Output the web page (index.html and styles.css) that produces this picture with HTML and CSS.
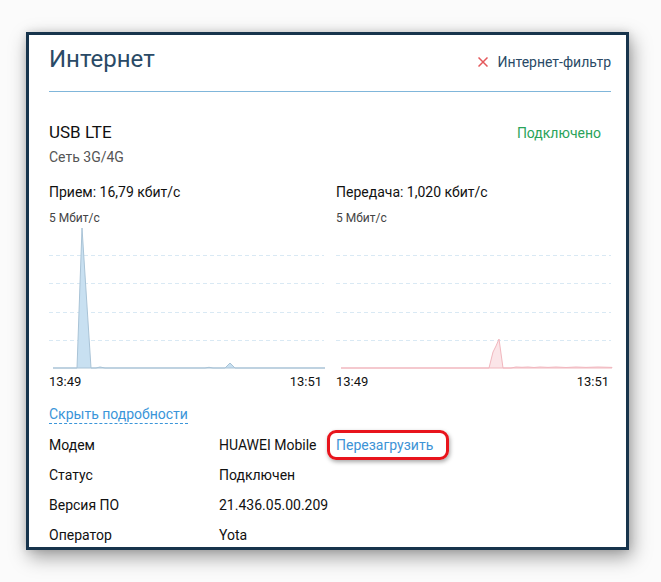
FILE: index.html
```html
<!DOCTYPE html>
<html lang="ru">
<head>
<meta charset="utf-8">
<title>Интернет</title>
<link rel="stylesheet" href="styles.css">
</head>
<body>
<div class="panel">
  <div class="head">
    <h1 class="title">Интернет</h1>
    <a class="filter"><svg class="x-icon" width="10" height="10" viewBox="0 0 10 10"><path d="M0.5 0.5 L9.5 9.5 M9.5 0.5 L0.5 9.5" stroke="#e4585b" stroke-width="1.5" fill="none"/></svg>Интернет-фильтр</a>
  </div>

  <div class="conn">
    <div class="conn-name">USB LTE</div>
    <div class="conn-state">Подключено</div>
  </div>
  <div class="conn-sub">Сеть 3G/4G</div>

  <div class="charts">
    <div class="chart">
      <div class="rate">Прием: 16,79 кбит/с</div>
      <div class="scale">5 Мбит/с</div>
      <svg class="graph" width="276" height="143" viewBox="0 0 276 143">
        <g stroke="#d9e9f4" stroke-width="1" stroke-dasharray="4 3">
          <line x1="0" y1="29.5" x2="275" y2="29.5"/>
          <line x1="0" y1="57.5" x2="275" y2="57.5"/>
          <line x1="0" y1="86.5" x2="275" y2="86.5"/>
          <line x1="0" y1="114.5" x2="275" y2="114.5"/>
        </g>
        <path d="M4 142 L28 142 L33 2 L42 142 L47 142 L51 141 L56 142 L156 142 L160 141.3 L164 142 L176 142 L181 137 L186 142 L276 142 Z" fill="#c8e0f1" stroke="#a9c3d6" stroke-width="1"/>
      </svg>
      <div class="times"><span>13:49</span><span>13:51</span></div>
    </div>
    <div class="chart">
      <div class="rate">Передача: 1,020 кбит/с</div>
      <div class="scale">5 Мбит/с</div>
      <svg class="graph" width="276" height="143" viewBox="0 0 276 143">
        <g stroke="#d9e9f4" stroke-width="1" stroke-dasharray="4 3">
          <line x1="0" y1="29.5" x2="275" y2="29.5"/>
          <line x1="0" y1="57.5" x2="275" y2="57.5"/>
          <line x1="0" y1="86.5" x2="275" y2="86.5"/>
          <line x1="0" y1="114.5" x2="275" y2="114.5"/>
        </g>
        <path d="M5 142 L153 142 L157 126 L160 120 L163 113 L167 142 L175 142 L180 141 L186 141.3 L192 141 L198 141.5 L204 141 L212 141.4 L220 141 L230 141.5 L240 141 L250 141.4 L262 141 L276 141.4 L276 142 Z" fill="#fbe5e8" stroke="#f1b7be" stroke-width="1"/>
      </svg>
      <div class="times"><span>13:49</span><span>13:51</span></div>
    </div>
  </div>

  <a class="toggle">Скрыть подробности</a>

  <div class="details">
    <div class="k">Модем</div>
    <div class="v">HUAWEI Mobile</div>
    <div class="act"><a class="reboot">Перезагрузить</a></div>

    <div class="k">Статус</div>
    <div class="v">Подключен</div>
    <div class="act"></div>

    <div class="k">Версия ПО</div>
    <div class="v">21.436.05.00.209</div>
    <div class="act"></div>

    <div class="k">Оператор</div>
    <div class="v">Yota</div>
    <div class="act"></div>
  </div>
</div>
</body>
</html>
```

FILE: styles.css
```css
* { box-sizing: border-box; }

html, body {
  margin: 0;
  padding: 0;
  background: #fbfbfb;
}

body {
  font-family: Roboto, "Liberation Sans", Arial, sans-serif;
  color: #1f1f1f;
  width: 661px;
  height: 582px;
  overflow: hidden;
}

.panel {
  margin: 32px 0 0 26px;
  width: 603px;
  height: 518px;
  background: #ffffff;
  border: 3px solid #17344c;
  box-shadow: 3px 7px 18px rgba(0, 0, 0, 0.38), 0 0 8px rgba(0, 0, 0, 0.12);
  padding: 10px 15px 0 20px;
  overflow: hidden;
}

.head {
  display: flex;
  justify-content: space-between;
  align-items: baseline;
  padding-bottom: 18px;
  border-bottom: 1px solid #80b6da;
}

.title {
  margin: 0;
  font-size: 24px;
  line-height: 28px;
  font-weight: 400;
  color: #2a4a66;
}

.filter {
  display: flex;
  align-items: baseline;
  gap: 9px;
  font-size: 14px;
  line-height: 18px;
  color: #2a4a66;
}

.x-icon {
  display: block;
}

.conn {
  margin-top: 30px;
  display: flex;
  justify-content: space-between;
  align-items: baseline;
  padding-right: 10px;
}

.conn-name {
  font-size: 17px;
  line-height: 20px;
  color: #111;
}

.conn-state {
  font-size: 14px;
  line-height: 18px;
  color: #2aa35a;
}

.conn-sub {
  margin-top: 6px;
  font-size: 14px;
  line-height: 18px;
  color: #555;
}

.charts {
  margin-top: 17px;
  display: grid;
  grid-template-columns: 276px 276px;
  column-gap: 11px;
}

.rate {
  font-size: 14px;
  line-height: 18px;
  color: #111;
}

.scale {
  margin-top: 10px;
  font-size: 12px;
  line-height: 14px;
  color: #444;
}

.graph {
  display: block;
  margin-top: 1px;
  overflow: visible;
}

.times {
  margin-top: 5px;
  display: flex;
  justify-content: space-between;
  padding-right: 3px;
  font-size: 13px;
  line-height: 16px;
  color: #111;
}

.toggle {
  display: inline-block;
  margin-top: 16px;
  font-size: 14px;
  line-height: 17px;
  color: #3a95d9;
  border-bottom: 1px dashed #3a95d9;
}

.details {
  margin-top: 6px;
  display: grid;
  grid-template-columns: 170px 117px 1fr;
  grid-auto-rows: 30px;
  font-size: 14px;
  line-height: 30px;
  color: #111;
}

.reboot {
  position: relative;
  display: inline-block;
  color: #3d93d6;
}

.reboot::after {
  content: "";
  position: absolute;
  left: -9px;
  right: -16px;
  top: 0;
  bottom: 0;
  border: 3px solid #e8141c;
  border-radius: 9px;
  box-shadow: 1px 2px 4px rgba(0, 0, 0, 0.35);
}
```
